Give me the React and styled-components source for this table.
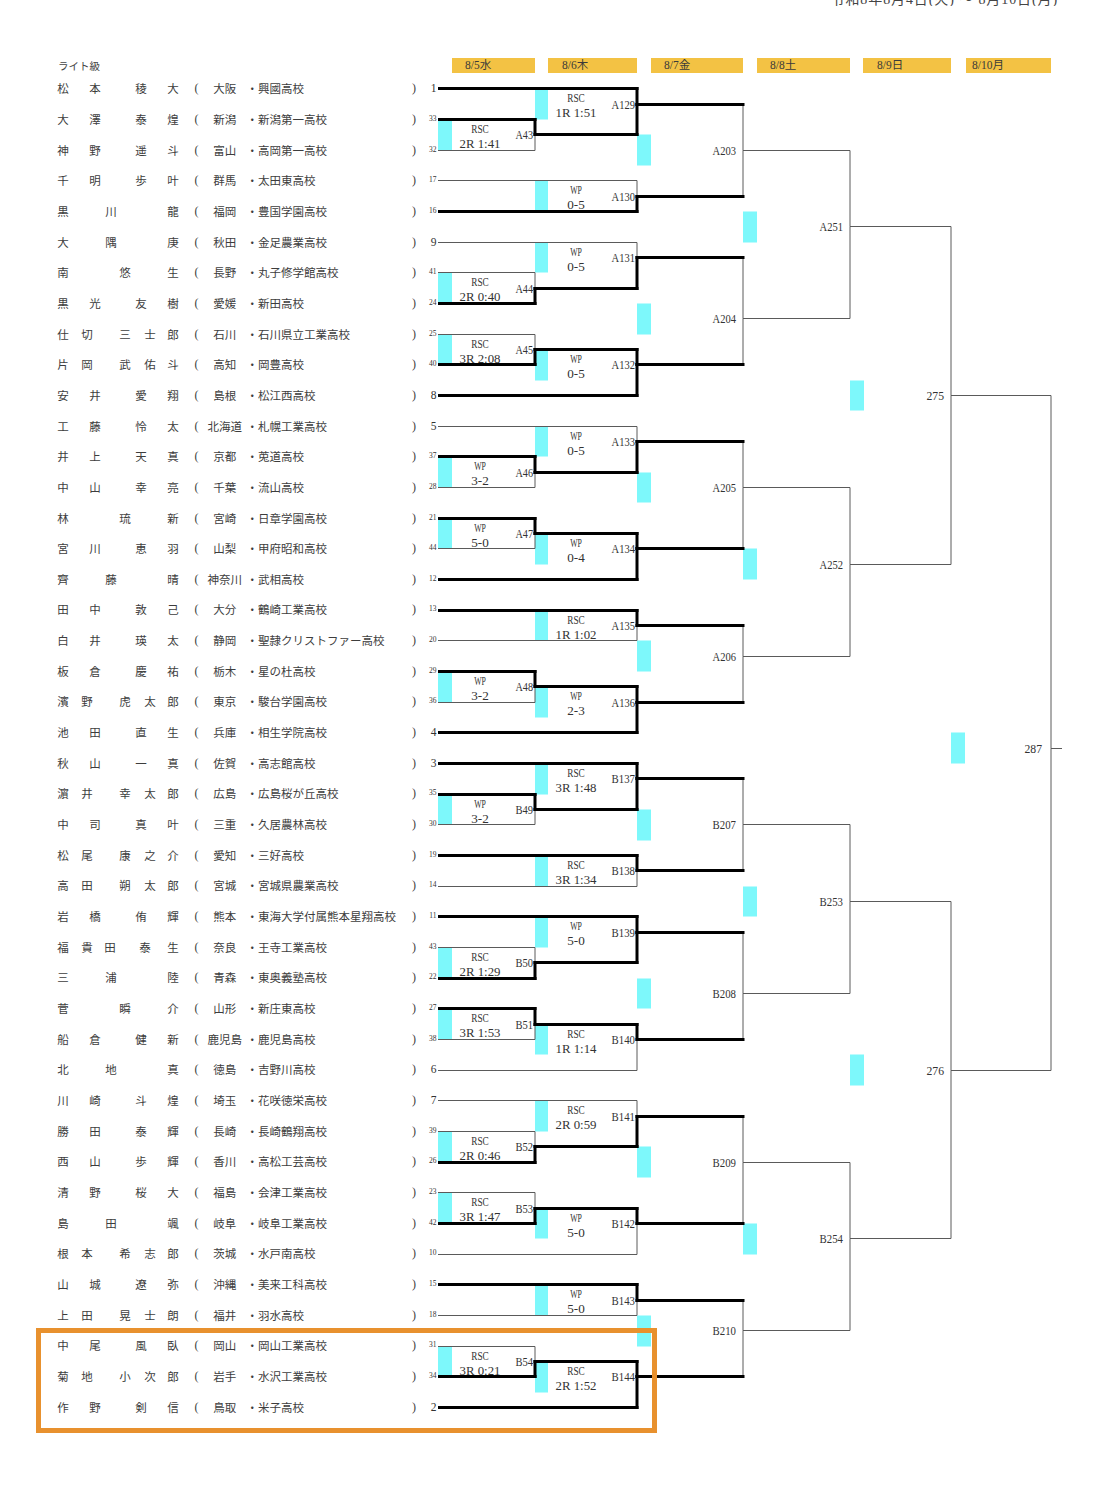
import styled, { createGlobalStyle } from "styled-components";

const GlobalStyle = createGlobalStyle`
  html, body {
    margin: 0;
    padding: 0;
    background: #fff;
  }
  body {
    font-family: "Noto Sans CJK JP", "Liberation Serif", sans-serif;
    color: #3a3a3a;
  }
`;

// 選手一覧: [姓, 名, 県, 学校, シード番号]
const players = [
  ["松本", "稜大", "大阪", "興國高校", 1],
  ["大澤", "泰煌", "新潟", "新潟第一高校", 33],
  ["神野", "遥斗", "富山", "高岡第一高校", 32],
  ["千明", "歩叶", "群馬", "太田東高校", 17],
  ["黒川", "龍", "福岡", "豊国学園高校", 16],
  ["大隅", "庚", "秋田", "金足農業高校", 9],
  ["南", "悠生", "長野", "丸子修学館高校", 41],
  ["黒光", "友樹", "愛媛", "新田高校", 24],
  ["仕切", "三士郎", "石川", "石川県立工業高校", 25],
  ["片岡", "武佑斗", "高知", "岡豊高校", 40],
  ["安井", "愛翔", "島根", "松江西高校", 8],
  ["工藤", "怜太", "北海道", "札幌工業高校", 5],
  ["井上", "天真", "京都", "莵道高校", 37],
  ["中山", "幸亮", "千葉", "流山高校", 28],
  ["林", "琉新", "宮崎", "日章学園高校", 21],
  ["宮川", "恵羽", "山梨", "甲府昭和高校", 44],
  ["齊藤", "晴", "神奈川", "武相高校", 12],
  ["田中", "敦己", "大分", "鶴崎工業高校", 13],
  ["白井", "瑛太", "静岡", "聖隷クリストファー高校", 20],
  ["板倉", "慶祐", "栃木", "星の杜高校", 29],
  ["濱野", "虎太郎", "東京", "駿台学園高校", 36],
  ["池田", "直生", "兵庫", "相生学院高校", 4],
  ["秋山", "一真", "佐賀", "高志館高校", 3],
  ["濵井", "幸太郎", "広島", "広島桜が丘高校", 35],
  ["中司", "真叶", "三重", "久居農林高校", 30],
  ["松尾", "康之介", "愛知", "三好高校", 19],
  ["高田", "朔太郎", "宮城", "宮城県農業高校", 14],
  ["岩橋", "侑輝", "熊本", "東海大学付属熊本星翔高校", 11],
  ["福貴田", "泰生", "奈良", "王寺工業高校", 43],
  ["三浦", "陸", "青森", "東奥義塾高校", 22],
  ["菅", "瞬介", "山形", "新庄東高校", 27],
  ["船倉", "健新", "鹿児島", "鹿児島高校", 38],
  ["北地", "真", "徳島", "吉野川高校", 6],
  ["川崎", "斗煌", "埼玉", "花咲徳栄高校", 7],
  ["勝田", "泰輝", "長崎", "長崎鶴翔高校", 39],
  ["西山", "歩輝", "香川", "高松工芸高校", 26],
  ["清野", "桜大", "福島", "会津工業高校", 23],
  ["島田", "颯", "岐阜", "岐阜工業高校", 42],
  ["根本", "希志郎", "茨城", "水戸南高校", 10],
  ["山城", "遼弥", "沖縄", "美来工科高校", 15],
  ["上田", "晃士朗", "福井", "羽水高校", 18],
  ["中尾", "風臥", "岡山", "岡山工業高校", 31],
  ["菊地", "小次郎", "岩手", "水沢工業高校", 34],
  ["作野", "剣信", "鳥取", "米子高校", 2],
];

// 均等割付の文字位置 (中心x)
const namePos = {
  "2-2": [63, 95, 141, 173],
  "2-1": [63, 111, 173],
  "1-2": [63, 125, 173],
  "2-3": [63, 87, 125, 150, 173],
  "3-2": [63, 87, 110, 145, 173],
};

const CHAR_W = 11.5;

const dates = [
  { label: "8/5水", w: 97, inset: 14, pad: 13 },
  { label: "8/6木", w: 102, inset: 13, pad: 14 },
  { label: "8/7金", w: 106, inset: 14, pad: 13 },
  { label: "8/8土", w: 107, inset: 14, pad: 13 },
  { label: "8/9日", w: 101, inset: 13, pad: 14 },
  { label: "8/10月", w: 100, inset: 15, pad: 6 },
];

// bracket
const colEnd = [535, 637, 743, 850, 951, 1051];
const START_X = 438;
const Y = (u) => Math.round(88.33 + u * 15.3333) + 0.5;

const played = [
  // col 0 (8/5)
  [
    ["A43", 2, 3, 3, [1, 0], "RSC", "2R 1:41"],
    ["A44", 7, 8, 13, [0, 1], "RSC", "2R 0:40"],
    ["A45", 9, 10, 17, [0, 1], "RSC", "3R 2:08"],
    ["A46", 13, 14, 25, [1, 0], "WP", "3-2"],
    ["A47", 15, 16, 29, [1, 0], "WP", "5-0"],
    ["A48", 20, 21, 39, [1, 0], "WP", "3-2"],
    ["B49", 24, 25, 47, [1, 0], "WP", "3-2"],
    ["B50", 29, 30, 57, [0, 1], "RSC", "2R 1:29"],
    ["B51", 31, 32, 61, [1, 0], "RSC", "3R 1:53"],
    ["B52", 35, 36, 69, [0, 1], "RSC", "2R 0:46"],
    ["B53", 37, 38, 73, [0, 1], "RSC", "3R 1:47"],
    ["B54", 42, 43, 83, [0, 1], "RSC", "3R 0:21"],
  ],
  // col 1 (8/6)
  [
    ["A129", 1, "A43", 1, [1, 1], "RSC", "1R 1:51"],
    ["A130", 4, 5, 7, [0, 1], "WP", "0-5"],
    ["A131", 6, "A44", 11, [0, 1], "WP", "0-5"],
    ["A132", "A45", 11, 18, [1, 1], "WP", "0-5"],
    ["A133", 12, "A46", 23, [0, 1], "WP", "0-5"],
    ["A134", "A47", 17, 30, [1, 1], "WP", "0-4"],
    ["A135", 18, 19, 35, [1, 0], "RSC", "1R 1:02"],
    ["A136", "A48", 22, 40, [1, 1], "WP", "2-3"],
    ["B137", 23, "B49", 45, [1, 1], "RSC", "3R 1:48"],
    ["B138", 26, 27, 51, [1, 0], "RSC", "3R 1:34"],
    ["B139", 28, "B50", 55, [1, 1], "WP", "5-0"],
    ["B140", "B51", 33, 62, [1, 0], "RSC", "1R 1:14"],
    ["B141", 34, "B52", 67, [0, 1], "RSC", "2R 0:59"],
    ["B142", "B53", 39, 74, [1, 0], "WP", "5-0"],
    ["B143", 40, 41, 79, [1, 0], "WP", "5-0"],
    ["B144", "B54", 44, 84, [1, 1], "RSC", "2R 1:52"],
  ],
];

const upcoming = [
  [
    ["A203", "A129", "A130", 4],
    ["A204", "A131", "A132", 15],
    ["A205", "A133", "A134", 26],
    ["A206", "A135", "A136", 37],
    ["B207", "B137", "B138", 48],
    ["B208", "B139", "B140", 59],
    ["B209", "B141", "B142", 70],
    ["B210", "B143", "B144", 81],
  ],
  [
    ["A251", "A203", "A204", 9],
    ["A252", "A205", "A206", 31],
    ["B253", "B207", "B208", 53],
    ["B254", "B209", "B210", 75],
  ],
  [
    ["275", "A251", "A252", 20],
    ["276", "B253", "B254", 64],
  ],
  [["287", "275", "276", 43]],
];

const buildMatches = () => {
  const byId = {};
  const list = [];
  played.forEach((col, c) =>
    col.forEach(([id, top, bot, out, thick, l1, l2]) => {
      const m = { id, c, top, bot, out, thick, lines: [l1, l2], done: true };
      byId[id] = m;
      list.push(m);
    })
  );
  upcoming.forEach((col, i) =>
    col.forEach(([id, top, bot, out]) => {
      const c = i + 2;
      const m = { id, c, top, bot, out, done: false };
      byId[id] = m;
      list.push(m);
    })
  );
  return { byId, list };
};

const { byId, list: matches } = buildMatches();

const refOf = (r, c) =>
  typeof r === "number"
    ? { u: 2 * (r - 1), x: START_X, match: null }
    : { u: byId[r].out, x: colEnd[c - 1], match: byId[r] };

const buildDrawing = () => {
  const segs = [];
  const cyans = [];
  const texts = [];
  matches.forEach((m) => {
    const xv = colEnd[m.c];
    const t = refOf(m.top, m.c);
    const b = refOf(m.bot, m.c);
    const thickOf = (ref, k) =>
      m.done ? !!m.thick[k] : !!(ref.match && ref.match.done);
    const tb = thickOf(t, 0);
    const bb = thickOf(b, 1);
    const yT = Y(t.u);
    const yB = Y(b.u);
    const yO = Y(m.out);
    segs.push({ x1: t.x + (tb && t.x === START_X ? 1.5 : 0), y1: yT, x2: xv, y2: yT, bold: tb });
    segs.push({ x1: b.x + (bb && b.x === START_X ? 1.5 : 0), y1: yB, x2: xv, y2: yB, bold: bb });
    segs.push({ x1: xv, y1: yT, x2: xv, y2: yO, bold: m.done && tb });
    segs.push({ x1: xv, y1: yO, x2: xv, y2: yB, bold: m.done && bb });

    if (m.c === 0) {
      cyans.push({ x: 438, w: 14, y: Y(t.u) - 0.5, h: Y(t.u + 2) - Y(t.u) });
    } else if (m.c === 1) {
      cyans.push({ x: 535, w: 13, y: Y(t.u), h: Y(t.u + 2) - Y(t.u) });
    } else {
      cyans.push({ x: colEnd[m.c - 1], w: 14, y: Y(m.out - 1), h: Y(m.out + 1) - Y(m.out - 1) });
    }

    if (m.done) {
      const cx = m.c === 0 ? 480 : 576;
      texts.push({ x: cx, y: yT + 13.5, s: m.lines[0], anchor: "middle" });
      texts.push({ x: cx, y: yT + 28.5, s: m.lines[1], anchor: "middle" });
    }
    const gap = m.c <= 1 ? 2 : m.id === "287" ? 9 : 7;
    texts.push({ x: xv - gap, y: yO + 4, s: m.id, anchor: "end" });
  });
  // final output
  const fin = byId["287"];
  segs.push({ x1: 1051, y1: Y(fin.out), x2: 1062, y2: Y(fin.out), bold: false });
  return { segs, cyans, texts };
};

const drawing = buildDrawing();

const App = () => {
  return (
    <>
      <GlobalStyle />
      <Sheet>
        <TopBar>
          <Period>令和8年8月4日(火) ～ 8月10日(月)</Period>
        </TopBar>
        <Header>
          <Title>ライト級</Title>
          {dates.map((d) => (
            <DateCol key={d.label} $w={d.w}>
              <DateBox $inset={d.inset} $pad={d.pad}>
                {d.label}
              </DateBox>
            </DateCol>
          ))}
        </Header>
        <Body>
          <NameTable>
            {players.map(([fam, given, pref, school, seed]) => {
              const chars = [...fam, ...given];
              const pos = namePos[`${[...fam].length}-${[...given].length}`];
              return (
                <Row key={seed}>
                  <NameCell>
                    {chars.map((ch, i) => (
                      <Char
                        key={i}
                        $ml={i === 0 ? pos[0] - CHAR_W / 2 : pos[i] - pos[i - 1] - CHAR_W}
                      >
                        {ch}
                      </Char>
                    ))}
                  </NameCell>
                  <Paren>(</Paren>
                  <Pref>{pref}</Pref>
                  <School>・{school}</School>
                  <Paren>)</Paren>
                  <Seed $small={seed >= 10}>{seed}</Seed>
                </Row>
              );
            })}
          </NameTable>
          <Bracket width="640" height="1360" viewBox="438 73 640 1360">
            {drawing.cyans.map((r, i) => (
              <Cyan key={i} x={r.x} y={r.y} width={r.w} height={r.h} />
            ))}
            {drawing.segs
              .filter((s) => !s.bold)
              .map((s, i) => (
                <Seg key={`t${i}`} {...s} />
              ))}
            {drawing.segs
              .filter((s) => s.bold)
              .map((s, i) => (
                <Seg key={`b${i}`} {...s} $bold />
              ))}
            {drawing.texts.map((t, i) => (
              <Label
                key={i}
                x={t.x}
                y={t.y}
                textAnchor={t.anchor}
                textLength={t.s.length * 5.85}
                lengthAdjust="spacingAndGlyphs"
              >
                {t.s}
              </Label>
            ))}
          </Bracket>
        </Body>
        <Highlight />
      </Sheet>
    </>
  );
};

export default App;

const Sheet = styled.div`
  position: relative;
  width: 1104px;
  height: 1486px;
  overflow: hidden;
  background: #fff;
`;

const TopBar = styled.div`
  height: 6px;
  overflow: hidden;
  display: flex;
  justify-content: flex-end;
  align-items: flex-end;
  padding-right: 46px;
`;

const Period = styled.div`
  font-family: "Liberation Serif", "Noto Sans CJK JP", serif;
  font-size: 14px;
  line-height: 14px;
  letter-spacing: 0.9px;
  white-space: nowrap;
  color: #444;
  margin-bottom: -1px;
`;

const Header = styled.div`
  display: flex;
  margin-top: 52px;
  height: 15px;
`;

const Title = styled.div`
  width: 380px;
  padding-left: 58px;
  flex: none;
  font-size: 10.5px;
  line-height: 15px;
  color: #444;
`;

const DateCol = styled.div`
  width: ${(p) => p.$w}px;
  flex: none;
  display: flex;
`;

const DateBox = styled.div`
  flex: 1;
  margin-left: ${(p) => p.$inset}px;
  padding-left: ${(p) => p.$pad}px;
  background: #f3c244;
  font-family: "Liberation Serif", "Noto Sans CJK JP", serif;
  font-size: 11.5px;
  line-height: 15px;
  color: #3a3a3a;
`;

const Body = styled.div`
  display: flex;
  align-items: flex-start;
`;

const NameTable = styled.div`
  width: 438px;
  flex: none;
  display: flex;
  flex-direction: column;
`;

const Row = styled.div`
  display: grid;
  grid-template-columns: 190px 13px 43.5px 161.5px 12px 18px;
  height: 30.6667px;
  align-items: center;
  font-size: 11.5px;
  line-height: 14px;
  color: #3d3d3d;
  white-space: nowrap;
`;

const NameCell = styled.div`
  display: flex;
`;

const Char = styled.span`
  flex: none;
  width: ${CHAR_W}px;
  margin-left: ${(p) => p.$ml}px;
  text-align: center;
`;

const Paren = styled.span`
  font-family: "Liberation Serif", serif;
  font-size: 12px;
  text-align: center;
`;

const Pref = styled.span`
  text-align: center;
`;

const School = styled.span`
  overflow: visible;
`;

const Seed = styled.span`
  font-family: "Liberation Serif", serif;
  font-size: ${(p) => (p.$small ? "7.5px" : "11.5px")};
  text-align: right;
  padding-right: 1.5px;
  color: #333;
`;

const Bracket = styled.svg`
  display: block;
  flex: none;
  overflow: visible;
`;

const Cyan = styled.rect`
  fill: #7df8fb;
`;

const Seg = styled.line`
  stroke: ${(p) => (p.$bold ? "#000" : "#5a5a5a")};
  stroke-width: ${(p) => (p.$bold ? 3 : 1)}px;
  stroke-linecap: ${(p) => (p.$bold ? "square" : "butt")};
`;

const Label = styled.text`
  font-family: "Liberation Serif", serif;
  font-size: 12px;
  fill: #333;
`;

const Highlight = styled.div`
  position: absolute;
  left: 36px;
  top: 1328px;
  width: 621px;
  height: 105px;
  box-sizing: border-box;
  border: 5.5px solid #e8912e;
  pointer-events: none;
`;
